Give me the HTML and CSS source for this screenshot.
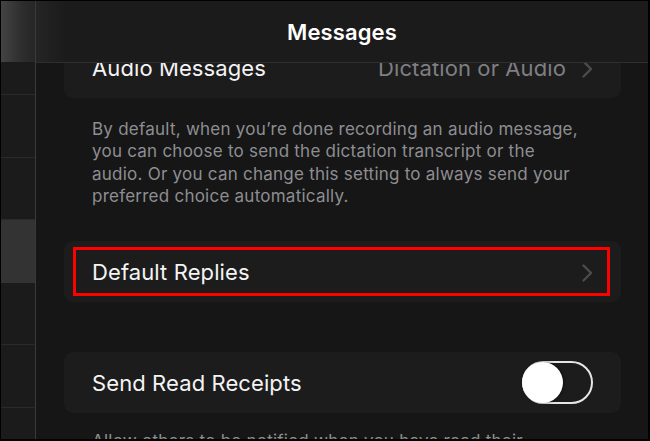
FILE: index.html
```html
<!DOCTYPE html>
<html lang="en">
<head>
<meta charset="utf-8">
<title>Messages</title>
<link rel="stylesheet" href="styles.css">
</head>
<body>
<div class="frame">
  <aside class="sidebar">
    <div class="side-head"></div>
    <div class="side-row partial"></div>
    <div class="side-row"></div>
    <div class="side-row"></div>
    <div class="side-row selected"></div>
    <div class="side-row"></div>
    <div class="side-row"></div>
  </aside>
  <main class="main">
    <header class="nav"><h1 class="nav-title">Messages</h1></header>
    <div class="content">
      <div class="card card-cut">
        <span class="label">Audio Messages</span>
        <span class="value">Dictation or Audio</span>
        <svg class="chevron" viewBox="0 0 11 18" width="11" height="18"><path d="M1.5 1.5 L9 9 L1.5 16.5" fill="none" stroke="currentColor" stroke-width="2.4" stroke-linecap="round" stroke-linejoin="round"/></svg>
      </div>
      <p class="note note-first">By default, when you’re done recording an audio message,<br>you can choose to send the dictation transcript or the<br>audio. Or you can change this setting to always send your<br>preferred choice automatically.</p>
      <div class="card card-replies">
        <span class="label">Default Replies</span>
        <svg class="chevron" viewBox="0 0 11 18" width="11" height="18"><path d="M1.5 1.5 L9 9 L1.5 16.5" fill="none" stroke="currentColor" stroke-width="2.4" stroke-linecap="round" stroke-linejoin="round"/></svg>
        <span class="annotation"></span>
      </div>
      <div class="card card-receipts">
        <span class="label">Send Read Receipts</span>
        <span class="toggle"><span class="knob"></span></span>
      </div>
      <p class="note note-last">Allow others to be notified when you have read their<br>messages.</p>
    </div>
  </main>
</div>
</body>
</html>
```
FILE: styles.css
```css
* { box-sizing: border-box; }
html, body { margin: 0; padding: 0; background: #000; }
body { font-family: Inter, "Noto Sans", "Liberation Sans", sans-serif; }

.frame {
  width: 650px;
  height: 441px;
  border-style: solid;
  border-color: #000;
  border-width: 1px 2px 2px 1px;
  display: flex;
  overflow: hidden;
  background: #161616;
}

.sidebar {
  width: 35px;
  flex: none;
  border-right: 1px solid #3a3a3a;
  background: #1b1b1b;
  display: flex;
  flex-direction: column;
}
.side-head {
  height: 61px;
  flex: none;
  background: linear-gradient(90deg, #444 0%, #2e2e2e 60%, #262626 100%);
}
.side-row {
  height: 62.6px;
  flex: none;
  border-bottom: 1px solid #2a2a2a;
}
.side-row.partial { height: 33px; }
.side-row.selected { background: #333; border-bottom-color: #333; }

.main {
  flex: 1;
  min-width: 0;
  display: flex;
  flex-direction: column;
}
.nav {
  height: 62px;
  flex: none;
  background: linear-gradient(90deg, #252525 0px, #1b1b1b 30px, #1b1b1b 100%);
  border-bottom: 1px solid #2f2f2f;
  display: flex;
  align-items: center;
  justify-content: center;
}
.nav-title {
  margin: 0;
  color: #fff;
  font-size: 22px;
  font-weight: 600;
  letter-spacing: 0.1px;
}

.content {
  flex: 1;
  min-height: 0;
  overflow: hidden;
  display: flex;
  flex-direction: column;
}

.card {
  position: relative;
  flex: none;
  height: 61px;
  margin: 0 27px 0 28px;
  padding: 0 28px;
  background: #1c1c1c;
  border-radius: 9px;
  display: flex;
  align-items: center;
}
.card-cut { margin-top: -26px; }
.card-replies { margin-top: 34px; }
.card-receipts { margin-top: 50px; }

.label {
  color: #f4f4f4;
  font-size: 22px;
  font-weight: 400;
  letter-spacing: 0.1px;
  flex: 1;
}
.value {
  color: #7f7f83;
  font-size: 22px;
  margin-right: 16px;
  letter-spacing: 0.1px;
}
.chevron {
  color: #4c4c4e;
  flex: none;
  margin-top: 2px;
}

.annotation {
  position: absolute;
  left: 9px;
  top: 6px;
  right: 11px;
  bottom: 6px;
  border: 3px solid #ff0000;
  pointer-events: none;
}

.toggle {
  flex: none;
  width: 71px;
  height: 43px;
  border: 2px solid #e6e6e6;
  border-radius: 22px;
  position: relative;
  display: flex;
  align-items: center;
  padding: 0;
}
.knob {
  width: 41px;
  height: 41px;
  margin-left: -2px;
  border-radius: 50%;
  background: #fff;
  box-shadow: 1px 0 3px rgba(0, 0, 0, 0.5);
}

.note {
  flex: none;
  margin: 0 27px 0 28px;
  padding: 0 28px;
  color: #8e8e92;
  font-size: 17px;
  line-height: 22.3px;
  letter-spacing: 0.24px;
}
.note-first { margin-top: 20px; }
.note-last { margin-top: 17px; }
```
